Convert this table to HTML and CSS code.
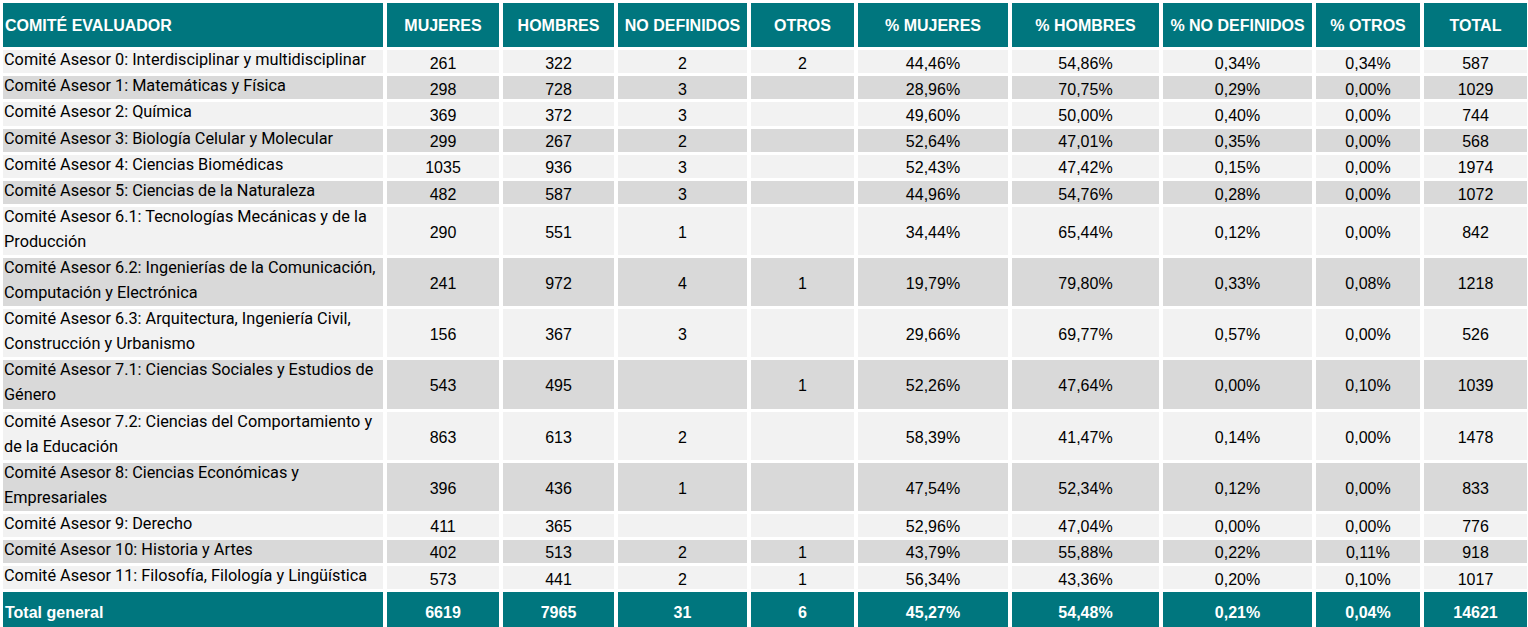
FILE: index.html
```html
<!DOCTYPE html>
<html lang="es">
<head>
<meta charset="utf-8">
<title>Comité evaluador</title>
<link rel="stylesheet" href="styles.css">
</head>
<body>
<div class="table">
  <div class="row head">
    <div class="cell name">COMITÉ EVALUADOR</div>
    <div class="cell">MUJERES</div>
    <div class="cell">HOMBRES</div>
    <div class="cell">NO DEFINIDOS</div>
    <div class="cell">OTROS</div>
    <div class="cell">% MUJERES</div>
    <div class="cell">% HOMBRES</div>
    <div class="cell">% NO DEFINIDOS</div>
    <div class="cell">% OTROS</div>
    <div class="cell">TOTAL</div>
  </div>
  <div class="row light">
    <div class="cell name"><span>Comité Asesor 0: Interdisciplinar y multidisciplinar</span></div>
    <div class="cell">261</div><div class="cell">322</div><div class="cell">2</div><div class="cell">2</div>
    <div class="cell">44,46%</div><div class="cell">54,86%</div><div class="cell">0,34%</div><div class="cell">0,34%</div><div class="cell">587</div>
  </div>
  <div class="row dark">
    <div class="cell name"><span>Comité Asesor 1: Matemáticas y Física</span></div>
    <div class="cell">298</div><div class="cell">728</div><div class="cell">3</div><div class="cell"></div>
    <div class="cell">28,96%</div><div class="cell">70,75%</div><div class="cell">0,29%</div><div class="cell">0,00%</div><div class="cell">1029</div>
  </div>
  <div class="row light">
    <div class="cell name"><span>Comité Asesor 2: Química</span></div>
    <div class="cell">369</div><div class="cell">372</div><div class="cell">3</div><div class="cell"></div>
    <div class="cell">49,60%</div><div class="cell">50,00%</div><div class="cell">0,40%</div><div class="cell">0,00%</div><div class="cell">744</div>
  </div>
  <div class="row dark">
    <div class="cell name"><span>Comité Asesor 3: Biología Celular y Molecular</span></div>
    <div class="cell">299</div><div class="cell">267</div><div class="cell">2</div><div class="cell"></div>
    <div class="cell">52,64%</div><div class="cell">47,01%</div><div class="cell">0,35%</div><div class="cell">0,00%</div><div class="cell">568</div>
  </div>
  <div class="row light">
    <div class="cell name"><span>Comité Asesor 4: Ciencias Biomédicas</span></div>
    <div class="cell">1035</div><div class="cell">936</div><div class="cell">3</div><div class="cell"></div>
    <div class="cell">52,43%</div><div class="cell">47,42%</div><div class="cell">0,15%</div><div class="cell">0,00%</div><div class="cell">1974</div>
  </div>
  <div class="row dark">
    <div class="cell name"><span>Comité Asesor 5: Ciencias de la Naturaleza</span></div>
    <div class="cell">482</div><div class="cell">587</div><div class="cell">3</div><div class="cell"></div>
    <div class="cell">44,96%</div><div class="cell">54,76%</div><div class="cell">0,28%</div><div class="cell">0,00%</div><div class="cell">1072</div>
  </div>
  <div class="row light tall">
    <div class="cell name"><span>Comité Asesor 6.1: Tecnologías Mecánicas y de la<br>Producción</span></div>
    <div class="cell">290</div><div class="cell">551</div><div class="cell">1</div><div class="cell"></div>
    <div class="cell">34,44%</div><div class="cell">65,44%</div><div class="cell">0,12%</div><div class="cell">0,00%</div><div class="cell">842</div>
  </div>
  <div class="row dark tall">
    <div class="cell name"><span>Comité Asesor 6.2: Ingenierías de la Comunicación,<br>Computación y Electrónica</span></div>
    <div class="cell">241</div><div class="cell">972</div><div class="cell">4</div><div class="cell">1</div>
    <div class="cell">19,79%</div><div class="cell">79,80%</div><div class="cell">0,33%</div><div class="cell">0,08%</div><div class="cell">1218</div>
  </div>
  <div class="row light tall">
    <div class="cell name"><span>Comité Asesor 6.3: Arquitectura, Ingeniería Civil,<br>Construcción y Urbanismo</span></div>
    <div class="cell">156</div><div class="cell">367</div><div class="cell">3</div><div class="cell"></div>
    <div class="cell">29,66%</div><div class="cell">69,77%</div><div class="cell">0,57%</div><div class="cell">0,00%</div><div class="cell">526</div>
  </div>
  <div class="row dark tall">
    <div class="cell name"><span>Comité Asesor 7.1: Ciencias Sociales y Estudios de<br>Género</span></div>
    <div class="cell">543</div><div class="cell">495</div><div class="cell"></div><div class="cell">1</div>
    <div class="cell">52,26%</div><div class="cell">47,64%</div><div class="cell">0,00%</div><div class="cell">0,10%</div><div class="cell">1039</div>
  </div>
  <div class="row light tall">
    <div class="cell name"><span>Comité Asesor 7.2: Ciencias del Comportamiento y<br>de la Educación</span></div>
    <div class="cell">863</div><div class="cell">613</div><div class="cell">2</div><div class="cell"></div>
    <div class="cell">58,39%</div><div class="cell">41,47%</div><div class="cell">0,14%</div><div class="cell">0,00%</div><div class="cell">1478</div>
  </div>
  <div class="row dark tall">
    <div class="cell name"><span>Comité Asesor 8: Ciencias Económicas y<br>Empresariales</span></div>
    <div class="cell">396</div><div class="cell">436</div><div class="cell">1</div><div class="cell"></div>
    <div class="cell">47,54%</div><div class="cell">52,34%</div><div class="cell">0,12%</div><div class="cell">0,00%</div><div class="cell">833</div>
  </div>
  <div class="row light">
    <div class="cell name"><span>Comité Asesor 9: Derecho</span></div>
    <div class="cell">411</div><div class="cell">365</div><div class="cell"></div><div class="cell"></div>
    <div class="cell">52,96%</div><div class="cell">47,04%</div><div class="cell">0,00%</div><div class="cell">0,00%</div><div class="cell">776</div>
  </div>
  <div class="row dark">
    <div class="cell name"><span>Comité Asesor 10: Historia y Artes</span></div>
    <div class="cell">402</div><div class="cell">513</div><div class="cell">2</div><div class="cell">1</div>
    <div class="cell">43,79%</div><div class="cell">55,88%</div><div class="cell">0,22%</div><div class="cell">0,11%</div><div class="cell">918</div>
  </div>
  <div class="row light">
    <div class="cell name"><span>Comité Asesor 11: Filosofía, Filología y Lingüística</span></div>
    <div class="cell">573</div><div class="cell">441</div><div class="cell">2</div><div class="cell">1</div>
    <div class="cell">56,34%</div><div class="cell">43,36%</div><div class="cell">0,20%</div><div class="cell">0,10%</div><div class="cell">1017</div>
  </div>
  <div class="row total">
    <div class="cell name">Total general</div>
    <div class="cell">6619</div><div class="cell">7965</div><div class="cell">31</div><div class="cell">6</div>
    <div class="cell">45,27%</div><div class="cell">54,48%</div><div class="cell">0,21%</div><div class="cell">0,04%</div><div class="cell">14621</div>
  </div>
</div>
</body>
</html>
```

FILE: styles.css
```css
html, body {
  margin: 0;
  padding: 0;
  background: #ffffff;
}

body {
  font-family: "Liberation Sans", Arial, sans-serif;
  font-size: 16px;
  color: #000000;
}

.table {
  display: flex;
  flex-direction: column;
  gap: 3px;
  padding: 3px 0 0 3px;
}

.row {
  display: grid;
  grid-template-columns: 380px 112px 111px 129px 103px 150px 147px 149px 104px 103px;
  column-gap: 4px;
  height: 23.2px;
}

.row.tall {
  height: 48.1px;
}

.row.head {
  height: 44px;
}

.row.total {
  height: 40px;
}

.cell {
  display: flex;
  align-items: center;
  justify-content: center;
  padding-top: 4px;
  box-sizing: border-box;
  white-space: nowrap;
  overflow: visible;
  min-width: 0;
}

.row.light .cell {
  background: #f2f2f2;
}

.row.dark .cell {
  background: #d9d9d9;
}

.row.head .cell,
.row.total .cell {
  background: #00767e;
  color: #ffffff;
  font-weight: bold;
  padding-top: 2px;
}

.cell.name {
  justify-content: flex-start;
  padding-left: 2px;
}

.row.light .cell.name,
.row.dark .cell.name {
  align-items: flex-start;
  padding-top: 0;
  padding-left: 1px;
  font-family: Roboto, "Liberation Sans", sans-serif;
  font-size: 16.3px;
  line-height: 25px;
}

.cell.name span {
  margin-top: -3px;
}
```
